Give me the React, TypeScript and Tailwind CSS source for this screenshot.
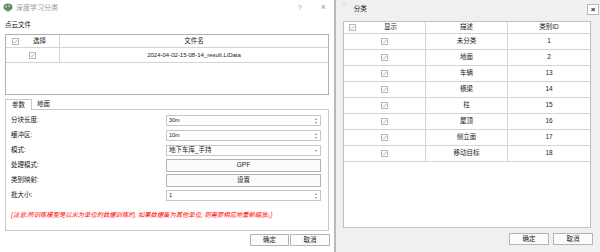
import { ReactNode } from 'react';

const font = "font-['Liberation_Sans','Noto_Sans_CJK_SC',sans-serif]";

function Check() {
    return (
        <svg width="7" height="7" viewBox="0 0 7 7" className="shrink-0">
            <rect x="0.5" y="0.5" width="6" height="6" fill="#fff" stroke="#b8b8b8" />
            <path d="M1.7 3.6 L2.9 4.8 L5.3 2.1" fill="none" stroke="#9a9a9a" strokeWidth="0.8" />
        </svg>
    );
}

function Spin({ value }: { value: string }) {
    return (
        <div className="h-[11px] w-full bg-white border border-[#c6c6c6] flex items-center justify-between pl-[2px] pr-[3px]">
            <span className="text-[5.5px] leading-none">{value}</span>
            <span className="flex flex-col text-[4px] leading-[4px] text-[#888]">
                <span>▴</span>
                <span>▾</span>
            </span>
        </div>
    );
}

function Row({ label, children }: { label: string; children: ReactNode }) {
    return (
        <div className="h-[15px] flex items-center">
            <span className="w-[160px] pl-[5px] text-[6.5px] leading-none">{label}</span>
            <div className="w-[155px] flex items-center">{children}</div>
        </div>
    );
}

function Btn({ children, className = "" }: { children: ReactNode; className?: string }) {
    return (
        <div className={`h-[12px] bg-[#fbfbfb] border border-[#b4b4b4] flex items-center justify-center text-[6.5px] leading-none ${className}`}>
            {children}
        </div>
    );
}

const classes = [
    ["未分类", "1"],
    ["地面", "2"],
    ["车辆", "13"],
    ["横梁", "14"],
    ["柱", "15"],
    ["屋顶", "16"],
    ["侧立面", "17"],
    ["移动目标", "18"],
];

export default function App() {
    return (
        <div className={`w-[600px] h-[252px] flex bg-[#f0f0f0] text-[#1a1a1a] ${font}`}>
            {/* left dialog */}
            <div className="w-[336px] h-full bg-white border-r-2 border-[#b9b9b9] flex flex-col">
                <div className="h-[15px] flex items-center pl-[3px] pr-[8px]">
                    <svg width="10" height="9" viewBox="0 0 10 9" className="shrink-0">
                        <ellipse cx="5" cy="4" rx="4.5" ry="3.5" fill="#5f8a6a" />
                        <circle cx="3" cy="3.5" r="1" fill="#c8d8c8" />
                        <circle cx="6" cy="3" r="0.9" fill="#c8d8c8" />
                        <rect x="3.5" y="6.5" width="3" height="2" fill="#7a8a7a" />
                    </svg>
                    <span className="ml-[3px] text-[7px] leading-none text-[#9a9a9a]">深度学习分类</span>
                    <span className="ml-auto text-[7px] leading-none text-[#9a9a9a]">?</span>
                    <span className="ml-[19px] text-[9px] leading-none text-[#9a9a9a]">×</span>
                </div>

                <div className="mt-[5px] pl-[5px] h-[10px] flex items-center text-[6.5px] leading-none">点云文件</div>

                <div className="mt-[4px] mx-[5px] h-[61px] border border-[#b0b0b0] bg-white">
                    <div className="h-[13px] flex border-b border-[#d4d4d4]">
                        <div className="w-[54px] flex items-center border-r border-[#d4d4d4] pl-[6px]">
                            <Check />
                            <span className="ml-[14px] text-[6.5px] leading-none">选择</span>
                        </div>
                        <div className="flex-1 flex items-center justify-center text-[6.5px] leading-none">文件名</div>
                    </div>
                    <div className="h-[15px] flex border-b border-[#d4d4d4]">
                        <div className="w-[54px] flex items-center justify-center border-r border-[#d4d4d4]">
                            <Check />
                        </div>
                        <div className="flex-1 flex items-center justify-center text-[6px] leading-none">2024-04-02-15-08-14_result.LiData</div>
                    </div>
                </div>

                <div className="mt-[4px] mx-[5px] flex items-end h-[10px]">
                    <div className="h-[11px] w-[27px] border border-b-0 border-[#c8c8c8] bg-white flex items-center justify-center text-[6.5px] leading-none relative top-[1px]">参数</div>
                    <div className="h-[9px] pl-[5px] flex items-center text-[6.5px] leading-none">地面</div>
                </div>

                <div className="mx-[5px] h-[122px] border border-[#c8c8c8] bg-white pt-[3px]">
                    <Row label="分块长度:"><Spin value="30m" /></Row>
                    <Row label="缓冲区:"><Spin value="10m" /></Row>
                    <Row label="模式:">
                        <div className="h-[11px] w-full bg-white border border-[#c6c6c6] flex items-center justify-between pl-[2px] pr-[3px]">
                            <span className="text-[6.5px] leading-none">地下车库_手持</span>
                            <span className="text-[4px] leading-none text-[#888]">▾</span>
                        </div>
                    </Row>
                    <Row label="处理模式:"><Btn className="w-full h-[13px] text-[5.5px]">GPF</Btn></Row>
                    <Row label="类别映射:"><Btn className="w-full h-[13px]">设置</Btn></Row>
                    <Row label="批大小:"><Spin value="1" /></Row>
                    <div className="mt-[7px] pl-[5px] h-[10px] flex items-center text-[6.3px] leading-none italic text-[#ff0000]">
                        (注意:所训练模型是以米为单位的数据训练的, 如果数据集为其他单位, 则需要相应地重新缩放。)
                    </div>
                </div>

                <div className="mt-[3px] mr-[4px] flex justify-end gap-[1px]">
                    <Btn className="w-[39px]">确定</Btn>
                    <Btn className="w-[40px]">取消</Btn>
                </div>
            </div>

            {/* right panel */}
            <div className="flex-1 h-full flex flex-col pl-[7px] pr-[7px]">
                <div className="h-[21px] flex items-start relative">
                    <span className="mt-[3px] text-[5px] leading-[3px] text-[#b0b0b0]">⁞⁞</span>
                    <span className="mt-[6px] ml-[8px] text-[6.5px] leading-none">分类</span>
                    <div className="ml-auto mt-[4px] -mr-[6px] w-[12px] h-[11px] border border-[#b8b8b8] bg-white flex items-center justify-center text-[8px] leading-none font-bold">×</div>
                </div>

                <div className="h-[207px] w-[248px] border border-[#c0c0c0] bg-white">
                    <div className="h-[12px] grid grid-cols-3 border-b border-[#d4d4d4]">
                        <div className="flex items-center border-r border-[#d4d4d4] pl-[5px]">
                            <Check />
                            <span className="ml-[28px] text-[6.5px] leading-none">显示</span>
                        </div>
                        <div className="flex items-center justify-center border-r border-[#d4d4d4] text-[6.5px] leading-none">描述</div>
                        <div className="flex items-center justify-center text-[6.5px] leading-none">类别ID</div>
                    </div>
                    {classes.map(([name, id]) => (
                        <div key={id} className="h-[16px] grid grid-cols-3 border-b border-[#d4d4d4]">
                            <div className="flex items-center justify-center border-r border-[#d4d4d4]"><Check /></div>
                            <div className="flex items-center justify-center border-r border-[#d4d4d4] text-[6.5px] leading-none">{name}</div>
                            <div className="flex items-center justify-center text-[6.5px] leading-none">{id}</div>
                        </div>
                    ))}
                </div>

                <div className="mt-[5px] flex justify-end gap-[4px]">
                    <Btn className="w-[40px] h-[11px]">确定</Btn>
                    <Btn className="w-[40px] h-[11px]">取消</Btn>
                </div>
            </div>
        </div>
    );
}
